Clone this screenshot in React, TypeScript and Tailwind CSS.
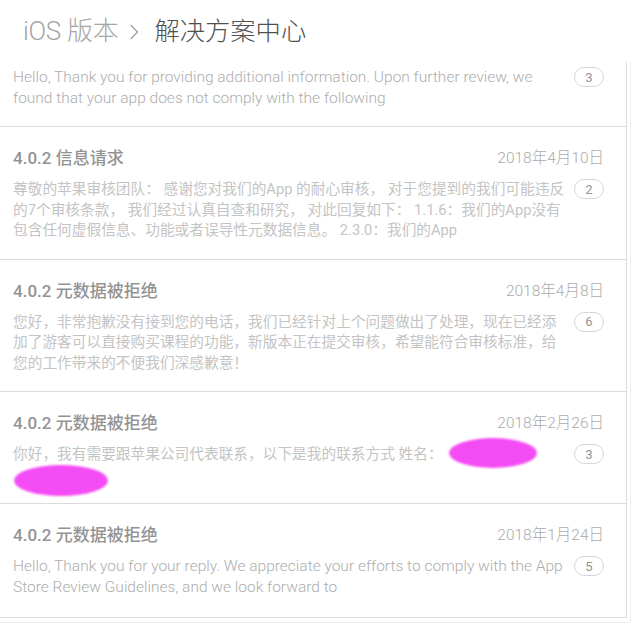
import React from "react";

const FONT = { fontFamily: "Roboto, 'Noto Sans CJK SC', sans-serif" };

type CardProps = {
  title?: string;
  date?: string;
  lines: string[];
  badge: string;
  top?: boolean;
  children?: React.ReactNode;
  english?: boolean;
  last?: boolean;
};

function Badge({ n }: { n: string }) {
  return (
    <div className="shrink-0 ml-2 w-[30px] h-[20px] rounded-full border border-[#d6d6d6] flex items-center justify-center text-[13px] text-[#959595] leading-none">
      {n}
    </div>
  );
}

function Card({ title, date, lines, badge, top, children, english, last }: CardProps) {
  return (
    <div
      className={`relative w-[627px] border-r border-b border-[#dcdcdc] pl-[13px] pr-[22px] ${
        top ? "pt-[5px]" : "pt-[20px]"
      } ${last ? "pb-[20px]" : "pb-[18px]"}`}
    >
      {title && (
        <div className="flex items-center justify-between h-[24px] mb-[8px]">
          <span className="text-[17px] text-[#939393] font-medium">{title}</span>
          <span className="text-[15.5px] text-[#ababab] font-light">{date}</span>
        </div>
      )}
      <div className="flex items-start">
        <div className="flex-1 min-w-0">
          {lines.map((l, i) => (
            <div
              key={i}
              className={`whitespace-nowrap leading-[20.5px] h-[20.5px] ${
                english ? "text-[15.5px] text-[#adadad] font-light" : "text-[14.7px] text-[#c4c4c4]"
              }`}
            >
              {l}
            </div>
          ))}
        </div>
        <Badge n={badge} />
      </div>
      {children}
    </div>
  );
}

export default function App() {
  return (
    <div className="w-[637px] h-[641px] bg-white overflow-hidden" style={FONT}>
      <div className="h-[62px] flex items-center pl-[23px] pt-[1px]">
        <span className="text-[26px] font-light text-[#a6a6a6] tracking-[-0.3px]">iOS 版本</span>
        <svg width="12" height="22" viewBox="0 0 12 22" className="ml-[10px] mr-[14px]">
          <path d="M3 4.5 L9.5 11 L3 17.5" fill="none" stroke="#a0a0a0" strokeWidth="1.4" strokeLinecap="round" strokeLinejoin="round" />
        </svg>
        <span className="text-[25.3px] font-light text-[#505050]">解决方案中心</span>
      </div>
      <div className="w-[631px] border-r border-b border-[#efefef]">
        <Card
          top
          english
          badge="3"
          lines={[
            "Hello, Thank you for providing additional information. Upon further review, we",
            "found that your app does not comply with the following",
          ]}
        />
        <Card
          title="4.0.2 信息请求"
          date="2018年4月10日"
          badge="2"
          lines={[
            "尊敬的苹果审核团队： 感谢您对我们的App 的耐心审核， 对于您提到的我们可能违反",
            "的7个审核条款， 我们经过认真自查和研究， 对此回复如下： 1.1.6：我们的App没有",
            "包含任何虚假信息、功能或者误导性元数据信息。 2.3.0：我们的App",
          ]}
        />
        <Card
          title="4.0.2 元数据被拒绝"
          date="2018年4月8日"
          badge="6"
          lines={[
            "您好，非常抱歉没有接到您的电话，我们已经针对上个问题做出了处理，现在已经添",
            "加了游客可以直接购买课程的功能，新版本正在提交审核，希望能符合审核标准，给",
            "您的工作带来的不便我们深感歉意！",
          ]}
        />
        <Card
          title="4.0.2 元数据被拒绝"
          date="2018年2月26日"
          badge="3"
          lines={["你好，我有需要跟苹果公司代表联系，以下是我的联系方式 姓名：", ""]}
        >
          <div className="absolute left-[449px] top-[46px] w-[88px] h-[30px] rounded-[50%] bg-[#f44cf4] blur-[1px]" />
          <div className="absolute left-[14px] top-[73px] w-[94px] h-[31px] rounded-[50%] bg-[#f44cf4] blur-[1px]" />
        </Card>
        <Card
          last
          title="4.0.2 元数据被拒绝"
          date="2018年1月24日"
          badge="5"
          english
          lines={[
            "Hello, Thank you for your reply. We appreciate your efforts to comply with the App",
            "Store Review Guidelines, and we look forward to",
          ]}
        />
        <div className="h-[4px]" />
      </div>
    </div>
  );
}
